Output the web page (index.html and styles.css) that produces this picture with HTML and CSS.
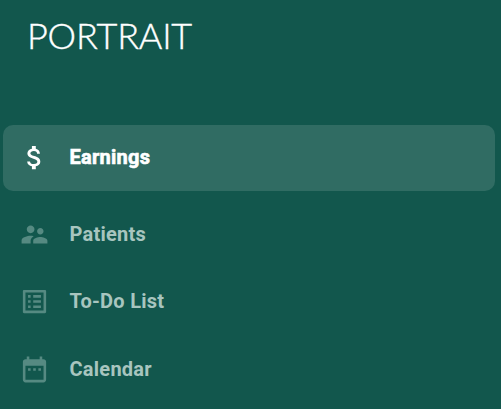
FILE: index.html
```
<!DOCTYPE html>
<html lang="en">
  <head>
    <meta charset="UTF-8" />
    <meta name="viewport" content="width=device-width, initial-scale=1.0" />
    <title>Portrait</title>
    <link rel="stylesheet" href="styles.css">
  </head>
  <body>
    <aside class="sidebar">
      <div class="logo">PORTRAIT</div>

      <nav class="menu">
        <a class="menu-item active">
          <svg class="icon" viewBox="0 0 24 24"><path d="M11.8 10.9c-2.27-.59-3-1.2-3-2.15 0-1.09 1.01-1.85 2.7-1.85 1.78 0 2.44.85 2.5 2.1h2.21c-.07-1.72-1.12-3.3-3.21-3.81V3h-3v2.16c-1.94.42-3.5 1.68-3.5 3.61 0 2.31 1.91 3.46 4.7 4.13 2.5.6 3 1.48 3 2.41 0 .69-.49 1.79-2.7 1.79-2.06 0-2.87-.92-2.98-2.1h-2.2c.12 2.19 1.76 3.42 3.68 3.83V21h3v-2.15c1.95-.37 3.5-1.5 3.5-3.55 0-2.84-2.43-3.81-4.7-4.4z"/></svg>
          <span>Earnings</span>
        </a>
        <a class="menu-item">
          <svg class="icon" viewBox="0 0 24 24"><path d="M16.5 12c1.38 0 2.49-1.12 2.49-2.5S17.88 7 16.5 7 14 8.12 14 9.5s1.12 2.5 2.5 2.5zM9 11c1.66 0 2.99-1.34 2.99-3S10.66 5 9 5 6 6.34 6 8s1.34 3 3 3zm7.5 3c-1.83 0-5.5.92-5.5 2.75V19h11v-2.25c0-1.83-3.67-2.75-5.5-2.75zM9 13c-2.33 0-7 1.17-7 3.5V19h7v-2.25c0-.85.33-2.34 2.37-3.47C10.5 13.1 9.66 13 9 13z"/></svg>
          <span>Patients</span>
        </a>
        <a class="menu-item">
          <svg class="icon" viewBox="0 0 24 24"><path d="M19 5v14H5V5h14m1.1-2H3.9c-.5 0-.9.4-.9.9v16.2c0 .4.4.9.9.9h16.2c.4 0 .9-.5.9-.9V3.9c0-.5-.5-.9-.9-.9zM11 7h6v2h-6V7zm0 4h6v2h-6v-2zm0 4h6v2h-6zM7 7h2v2H7zm0 4h2v2H7zm0 4h2v2H7z"/></svg>
          <span>To-Do List</span>
        </a>
        <a class="menu-item">
          <svg class="icon" viewBox="0 0 24 24"><path d="M9 11H7v2h2v-2zm4 0h-2v2h2v-2zm4 0h-2v2h2v-2zm2-7h-1V2h-2v2H8V2H6v2H5c-1.11 0-1.99.9-1.99 2L3 20c0 1.1.89 2 2 2h14c1.1 0 2-.9 2-2V6c0-1.1-.9-2-2-2zm0 16H5V9h14v11z"/></svg>
          <span>Calendar</span>
        </a>
      </nav>
    </aside>
  </body>
</html>
```
FILE: styles.css
```
* {
  margin: 0;
  padding: 0;
  box-sizing: border-box;
}

body {
  font-family: Roboto, sans-serif;
  background: #12574d;
  overflow: hidden;
}

.sidebar {
  height: 409px;
  padding: 13px 6px 0 3px;
  overflow: hidden;
}

.logo {
  height: 44px;
  padding-left: 24px;
  font-family: Lato, sans-serif;
  font-size: 36px;
  font-weight: 300;
  line-height: 44px;
  letter-spacing: -0.2px;
  color: #fff;
  -webkit-text-stroke: 0.4px #fff;
}

.menu {
  display: grid;
  margin-top: 68px;
}

.menu-item {
  display: flex;
  align-items: center;
  gap: 19.5px;
  height: 67.4px;
  padding-left: 16px;
  border-radius: 10px;
  font-size: 20px;
  font-weight: 700;
  letter-spacing: 0.25px;
  color: #a8c5bf;
}

.menu-item span {
  padding-bottom: 2px;
}

.menu-item.active {
  height: 66px;
  margin-bottom: 10.4px;
  background: #306c63;
  color: #fff;
  -webkit-text-stroke: 0.6px #fff;
}

.icon {
  width: 31px;
  height: 31px;
  margin-bottom: 1px;
  fill: #568a82;
}

.active .icon {
  fill: #fff;
}
```
